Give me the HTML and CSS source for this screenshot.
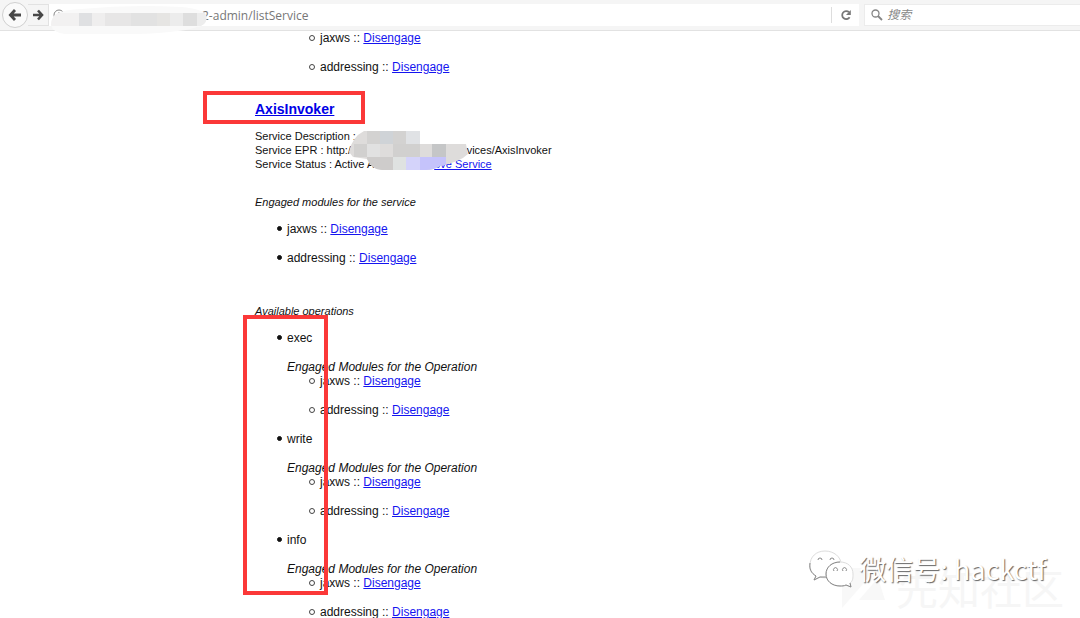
FILE: index.html
```html
<!DOCTYPE html>
<html lang="en">
<head>
<meta charset="utf-8">
<title>List Services</title>
<link rel="stylesheet" href="styles.css">
</head>
<body>
<header class="toolbar">
  <button class="nav back" type="button" aria-label="Back"><svg width="14" height="14" viewBox="0 0 14 14"><path d="M7 2 2.400 7 7 12M3 7h10" fill="none" stroke="#484848" stroke-width="2.800"/></svg></button>
  <button class="nav forward" type="button" aria-label="Forward"><svg width="12" height="12" viewBox="0 0 12 12"><path d="M6 1.500 10 6 6 10.500M9.500 6H1" fill="none" stroke="#484848" stroke-width="2.600"/></svg></button>
  <div class="address">
    <svg class="info" width="12" height="12" viewBox="0 0 12 12"><circle cx="6" cy="6" r="5" fill="none" stroke="#858585"/><path d="M6 3v1.500M6 5.500V9" stroke="#858585"/></svg>
    <input class="url" type="text" aria-label="Address" value="2-admin/listService">
    <button class="reload" type="button" aria-label="Reload"><svg width="12" height="12" viewBox="0 0 12 12"><path d="M9.600 8.200A4 4 0 1 1 9 3.200" fill="none" stroke="#777" stroke-width="1.800"/><path d="M10.800 1v5H6z" fill="#777"/></svg></button>
  </div>
  <label class="search">
    <svg width="12" height="12" viewBox="0 0 12 12"><circle cx="4.500" cy="4.500" r="3.500" fill="none" stroke="#858585" stroke-width="1.300"/><path d="M7 7l4 4" stroke="#858585" stroke-width="1.800"/></svg>
    <input type="text" aria-label="搜索" placeholder="搜索">
  </label>
  <svg class="smudge" width="160" height="30" viewBox="0 0 160 30">
    <defs><clipPath id="urlBlob"><path d="M4 10Q10 5 30 4Q80-1 130 2Q152 4 155 10Q157 18 150 21Q142 23 135 25Q105 29 85 29H14Q2 28 0 20Q0 14 4 10Z"/></clipPath></defs>
    <g clip-path="url(#urlBlob)">
      <path fill="#f9f9f9" d="M0 0h160v30H0z"/>
      <path fill="#f2f1f1" d="M0 8h28v13H0z"/><path fill="#dfe0e2" d="M28 8h13v13H28z"/><path fill="#efeeee" d="M41 8h13v13H41z"/><path fill="#e7e6e6" d="M54 8h26v13H54z"/><path fill="#e2e2e2" d="M80 8h26v13H80z"/><path fill="#e6e5e3" d="M106 8h13v13h-13z"/><path fill="#ececec" d="M119 8h13v13h-13z"/><path fill="#dedede" d="M132 8h14v13h-14z"/><path fill="#ededed" d="M146 8h14v13h-14z"/>
    </g>
  </svg>
</header>
<main class="page">
  <ul class="modules nested">
    <li>jaxws :: <a href="#">Disengage</a></li>
    <li>addressing :: <a href="#">Disengage</a></li>
  </ul>
  <h2 class="service"><a href="#">AxisInvoker</a></h2>
  <div class="details">
    <p>Service Description :</p>
    <p class="epr"><span>Service EPR : http:/</span><span>rvices/AxisInvoker</span></p>
    <p class="status"><span>Service Status : Active A</span><a href="#">ove Service</a></p>
    <svg class="mosaic" width="122" height="42" viewBox="0 0 122 42">
      <defs><clipPath id="detailBlob"><path d="M1 22Q4 7 16 1H72V14H118L120 24Q112 32 92 36Q86 40 78 40H34Q24 40 19 29L5 27Z"/></clipPath></defs>
      <g clip-path="url(#detailBlob)">
        <path fill="#dedcdb" d="M0 0h122v42H0z"/><path fill="#d3d2d1" d="M19 0h13v14H19zM45 0h13v14H45z"/><path fill="#cfd3d7" d="M32 0h13v14H32z"/><path fill="#e0e2e5" d="M58 0h14v14H58z"/><path fill="#d1d0cf" d="M6 14h13v13H6zM45 14h27v13H45z"/><path fill="#e1e1e1" d="M19 14h13v13H19z"/><path fill="#c5c6c7" d="M84 14h14v13H84z"/><path fill="#cecccb" d="M19 27h26v15H19z"/><path fill="#dfe2e1" d="M45 27h13v15H45z"/><path fill="#d4d3fa" d="M58 27h14v15H58z"/><path fill="#c5c3fb" d="M72 27h26v15H72z"/>
      </g>
    </svg>
  </div>
  <p class="caption">Engaged modules for the service</p>
  <ul class="modules">
    <li>jaxws :: <a href="#">Disengage</a></li>
    <li>addressing :: <a href="#">Disengage</a></li>
  </ul>
  <p class="caption operations-caption">Available operations</p>
  <ul class="operations">
    <li>exec
      <p class="operation-title">Engaged Modules for the Operation</p>
      <ul class="modules inner"><li>jaxws :: <a href="#">Disengage</a></li><li>addressing :: <a href="#">Disengage</a></li></ul>
    </li>
    <li>write
      <p class="operation-title">Engaged Modules for the Operation</p>
      <ul class="modules inner"><li>jaxws :: <a href="#">Disengage</a></li><li>addressing :: <a href="#">Disengage</a></li></ul>
    </li>
    <li>info
      <p class="operation-title">Engaged Modules for the Operation</p>
      <ul class="modules inner"><li>jaxws :: <a href="#">Disengage</a></li><li>addressing :: <a href="#">Disengage</a></li></ul>
    </li>
  </ul>
</main>
<div class="mark mark-service"></div>
<div class="mark mark-operations"></div>
<div class="forum"><svg width="46" height="44" viewBox="0 0 46 44"><path d="M0 2h35L0 42zM36 12l7 22H17z" fill="#f8f8f8"/></svg><span>先知社区</span></div>
<div class="wechat">
  <svg width="46" height="40" viewBox="0 0 46 40">
    <path d="M16 1C7 1 1 7 1 15c0 5 2 8 6 11l-2 4 6-3c3 1 6 1 9 0 8-2 12-7 12-13C32 7 25 1 16 1z" fill="#fff" stroke="#ddd"/>
    <path d="M1 13c-1 6 1 10 6 13l-2 4 6-3h6" fill="none" stroke="#888"/>
    <path d="M31 12c-8 0-14 5-14 12s6 12 14 12c2 0 4 0 6-1l5 2-1-4c3-2 3-5 3-9 0-7-5-12-13-12z" fill="#fff" stroke="#ddd"/>
    <path d="M31 12c-8 0-14 5-14 12s6 12 14 12c2 0 4 0 6-1l5 2-1-4" fill="none" stroke="#888"/>
    <path d="M9 10a2 2 0 1 1 4 0M21 10a2 2 0 1 1 4 0M25 21a2 2 0 1 1 3 0M34 21a2 2 0 1 1 3 0" fill="none" stroke="#888"/>
  </svg>
  <span>微信号: hackctf</span>
</div>
</body>
</html>
```
FILE: styles.css
```css
*, *::before { box-sizing: border-box; }
body { margin: 0; position: relative; min-height: 100vh; overflow: hidden; background: #fff; color: #111; font: 12px/14px "Liberation Sans", Arial, sans-serif; }
p, h2, ul { margin: 0; padding: 0; }
button { padding: 0; border: 0; background: none; }
input { border: 0; outline: 0; padding: 0; background: transparent; min-width: 0; }
a { color: #1414f0; }

.toolbar { position: relative; display: flex; align-items: center; height: 31px; padding-left: 2px; background: #f5f5f5; border-bottom: 1px solid #e2e2e2; }
.nav { display: flex; align-items: center; justify-content: center; }
.back { width: 26px; height: 26px; border: 1px solid #d0d0d0; border-radius: 50%; background: #fafafa; }
.forward { width: 21px; height: 22px; border: 1px solid #e2e2e2; border-left: 0; }
.address { display: flex; align-items: center; flex: 815; height: 22px; padding-left: 4px; background: #fff; }
.url { flex: 1; padding-left: 137px; color: #777; font: 12px "Open Sans", "Noto Sans", sans-serif; }
.reload { display: flex; align-items: center; justify-content: center; width: 28px; height: 16px; border-left: 1px solid #ddd; }
.search { display: flex; align-items: center; gap: 4px; flex: 211; height: 22px; margin-left: 5px; padding-left: 6px; background: #fff; border: 1px solid #ececec; border-right: 0; }
.search input { flex: 1; padding-bottom: 3px; font: italic 12px "Noto Sans CJK SC", sans-serif; }
.search input::placeholder { color: #888; opacity: 1; }
.smudge { position: absolute; left: 51px; top: 5px; }

.page { padding-left: 255px; }
.modules, .operations { padding-left: 32px; list-style: none; }
.modules li + li { margin-top: 15px; }
li::before { content: ""; display: inline-block; width: 5px; height: 5px; margin-left: -10px; margin-right: 5px; border: 1px solid #111; border-radius: 50%; background: #111; vertical-align: 2px; }
.nested li::before, .inner li::before { width: 6px; height: 6px; margin-left: -11px; border-color: #444; background: none; vertical-align: 1px; }
.nested { padding-left: 65px; }
.inner { padding-left: 33px; }
.service { margin-top: 27px; font-size: 14px; line-height: 16px; }
.service a { color: #0000e6; }
.details { position: relative; margin-top: 12px; font-size: 11px; }
.epr, .status { display: flex; }
.epr { gap: 112px; }
.status { gap: 60px; }
.mosaic { position: absolute; left: 93px; top: 1px; }
.caption { margin-top: 24px; margin-bottom: 13px; font-size: 11px; font-style: italic; }
.operations-caption { margin-top: 39px; }
.operations > li + li { margin-top: 15px; }
.operation-title { margin-top: 15px; font-style: italic; }

.mark { position: absolute; border: 4px solid #fb3838; }
.mark-service { left: 203px; top: 91px; width: 162px; height: 33px; }
.mark-operations { left: 243px; top: 315px; width: 85px; height: 280px; }
.forum { position: absolute; right: 16px; top: 566px; display: flex; gap: 8px; color: #f6f6f6; font: 42px/42px "Noto Sans CJK SC", sans-serif; }
.wechat { position: absolute; right: 34px; top: 550px; display: flex; gap: 4px; color: #fff; font: 27px/38px "Noto Sans CJK SC", sans-serif; text-shadow: 1px 1px 1px #666; }
```
